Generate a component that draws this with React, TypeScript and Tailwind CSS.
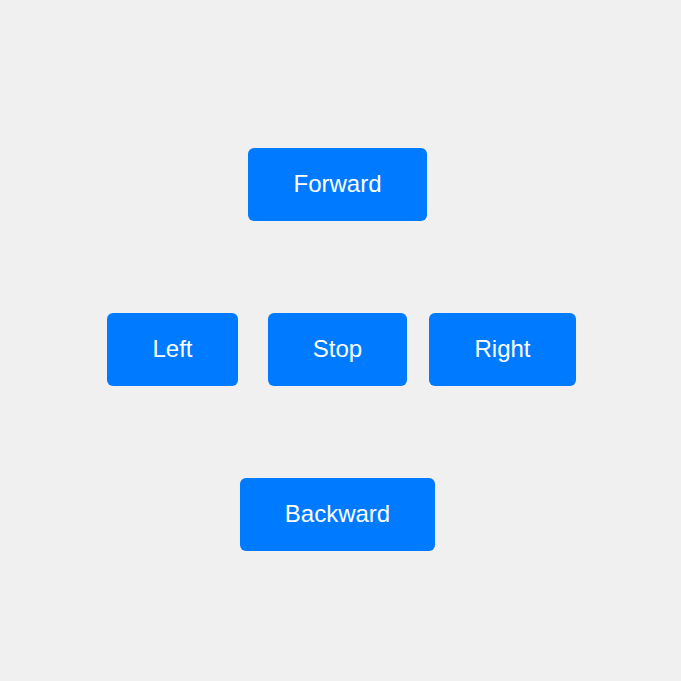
import React from 'react';

const Btn: React.FC<{ label: string; className?: string }> = ({ label, className = '' }) => (
  <button
    className={`h-[73px] rounded-[6px] bg-[#007bff] pb-[2px] text-[24px] leading-[28px] text-white ${className}`}
    style={{ fontFamily: '"Liberation Sans", Arial, sans-serif' }}
  >
    {label}
  </button>
);

export default function App() {
  return (
    <div className="flex h-[681px] w-[681px] flex-col items-center gap-[92px] bg-[#f0f0f0] pr-[6px] pt-[148px]">
      <Btn label="Forward" className="w-[179px]" />
      <div className="ml-[8px] flex">
        <Btn label="Left" className="mr-[30px] w-[131px]" />
        <Btn label="Stop" className="mr-[22px] w-[139px]" />
        <Btn label="Right" className="w-[147px]" />
      </div>
      <Btn label="Backward" className="w-[195px]" />
    </div>
  );
}
